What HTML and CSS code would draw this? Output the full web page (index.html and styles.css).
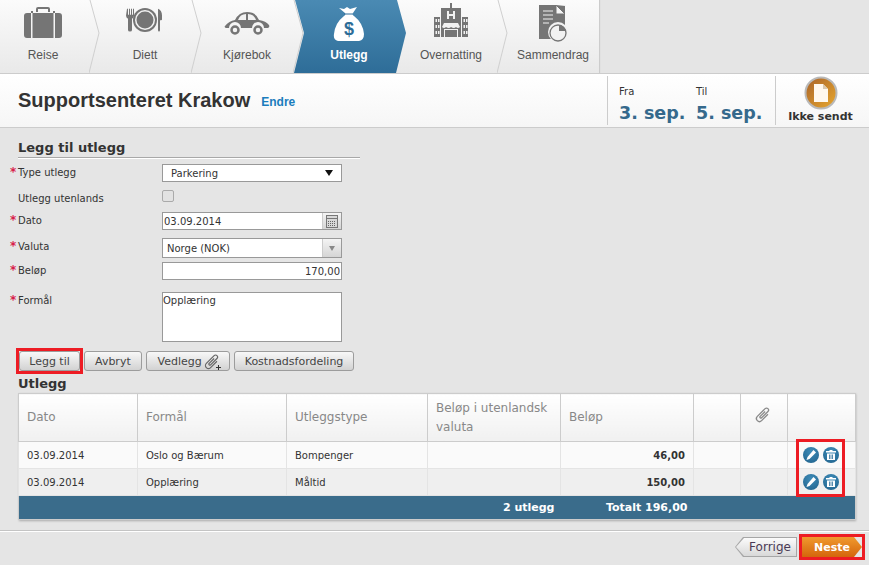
FILE: index.html
```html
<!DOCTYPE html>
<html lang="en">
<head>
    <meta charset="UTF-8">
    <title>Utlegg</title>
    <link rel="stylesheet" href="styles.css">
</head>
<body>
    <nav class="tabs">
        <div class="tab">
            <svg class="tab-icon" width="40" height="36" viewBox="0 -3 40 36">
                <path fill="#757575" d="M13 6V3q0-2 2-2h10q2 0 2 2v3h-2V3H15v3zM8 5h2v2H8zM30 5h2v2h-2zM1 10q0-3 3-3h4v25H4q-3 0-3-3zM9.500 7h21v25h-21zM32 7h4q3 0 3 3v19q0 3-3 3h-4z"/>
            </svg>
            <span>Reise</span>
            <svg class="sep" width="12" height="73" viewBox="0 0 12 73"><path d="M1 0L10 33L0 73" fill="none" stroke="#cfcfcf"/></svg>
        </div>
        <div class="tab">
            <svg class="tab-icon" width="38" height="34" viewBox="0 -1 38 34">
                <path fill="#757575" transform="translate(0 4) scale(1 .76)" d="M1 1h1v8h1V1h1v8h1V1h1v8h1V1h1v9q0 3-2 4v15q0 2-2 2t-2-2V14q-2-1-2-4zM32 1q4 2 4 9v5q0 1-1 1h-1v13q0 2-1 2t-1-2z"/>
                <circle cx="19" cy="16" r="12" fill="#757575"/>
                <circle cx="19" cy="16" r="10" fill="#f2f2f2"/>
                <circle cx="19" cy="16" r="8.500" fill="#757575"/>
            </svg>
            <span>Diett</span>
            <svg class="sep" width="12" height="73" viewBox="0 0 12 73"><path d="M1 0L10 33L0 73" fill="none" stroke="#cfcfcf"/></svg>
        </div>
        <div class="tab">
            <svg class="tab-icon" width="46" height="34" viewBox="0 -2 46 34">
                <path fill="#757575" d="M1 21q4-5 10-6 4-8 12-8 9 0 12 8 7 1 10 5 1 2-1 3h-4a6 6 0 0 0-12 0H17a6 6 0 0 0-12 0H2q-2-1-1-2z"/>
                <path fill="#f2f2f2" d="M14 15q2-6 8-6v6zM24 9q6 0 8 6h-8z"/>
                <circle cx="11" cy="25" r="3.500" fill="none" stroke="#757575" stroke-width="2.500"/>
                <circle cx="34" cy="25" r="3.500" fill="none" stroke="#757575" stroke-width="2.500"/>
            </svg>
            <span>Kjørebok</span>
            <svg class="sep" width="12" height="73" viewBox="0 0 12 73"><path d="M1 0L10 33L0 73" fill="none" stroke="#cfcfcf"/></svg>
        </div>
        <div class="tab tab-active">
            <svg class="active-bg" width="112" height="73" viewBox="0 0 112 73">
                <defs>
                    <linearGradient id="activeGrad" x1="0" y1="0" x2="0" y2="1">
                        <stop offset="0" stop-color="#4a8ab3"/>
                        <stop offset="1" stop-color="#2e6d98"/>
                    </linearGradient>
                </defs>
                <path d="M1 0H103L112 33L102 73H0L10 33Z" fill="url(#activeGrad)"/>
            </svg>
            <svg class="tab-icon" width="32" height="38" viewBox="0 -3 32 38">
                <path fill="#fff" d="M6 2l5 1 3-2 3 2 7-2-4 6q-1 2 1 3 9 7 10 18 0 6-5 7-10 1-21 0-5-1-4-7 1-11 10-18 2-1 1-3z"/>
                <path stroke="#2e6d98" d="M11 8h9"/>
                <text x="16" y="29" class="dollar">$</text>
            </svg>
            <span>Utlegg</span>
        </div>
        <div class="tab">
            <svg class="tab-icon" width="36" height="34" viewBox="0 0 36 34">
                <path fill="#757575" d="M17 0h2v5h9v29H8V5h9zM1 14h6v20H1zM29 14h6v20h-6z"/>
                <path fill="#f2f2f2" d="M14 8h2v3h4V8h2v8h-2v-3h-4v3h-2zM2.500 16h1.500v3H2.500zM5 16h1.500v3H5zM2.500 22h1.500v3H2.500zM5 22h1.500v3H5zM2.500 28h1.500v3H2.500zM5 28h1.500v3H5zM30.500 16H32v3h-1.500zM33 16h1.500v3H33zM30.500 22H32v3h-1.500zM33 22h1.500v3H33zM30.500 28H32v3h-1.500zM33 28h1.500v3H33z"/>
                <path fill="#f2f2f2" d="M11 20h14l2 4q-2 2-4 0-2 2-5 0-2 2-5 0-2 2-4 0z"/>
                <path fill="#f2f2f2" d="M11 26h1v8h-1zM24 26h1v8h-1zM12 26h12v1H12z"/>
            </svg>
            <span>Overnatting</span>
            <svg class="sep" width="12" height="73" viewBox="0 0 12 73"><path d="M1 0L10 33L0 73" fill="none" stroke="#cfcfcf"/></svg>
        </div>
        <div class="tab">
            <svg class="tab-icon" width="30" height="40" viewBox="0 -2 30 40">
                <path fill="#757575" d="M1 0h26v34H1z"/>
                <path fill="#f4f4f4" stroke="#757575" d="M18 0l9 9h-9z"/>
                <path fill="#f4f4f4" d="M18 0h10v1l-1 0z"/>
                <path stroke="#f2f2f2" stroke-width="1.200" d="M5 6h10M5 10h10M5 14h10M5 18h6"/>
                <circle cx="20" cy="27" r="10" fill="#f2f2f2"/>
                <circle cx="20" cy="28" r="8" fill="none" stroke="#757575" stroke-width="1.300"/>
                <path fill="#757575" d="M21 26v-6a8 8 0 0 1 7 6z"/>
            </svg>
            <span>Sammendrag</span>
        </div>
    </nav>

    <header class="trip">
        <h1>Supportsenteret Krakow</h1>
        <a class="change" href="#">Endre</a>
        <div class="dates">
            <div class="date">
                <small>Fra</small>
                <strong>3. sep.</strong>
            </div>
            <div class="date">
                <small>Til</small>
                <strong>5. sep.</strong>
            </div>
        </div>
        <div class="status">
            <svg width="34" height="34" viewBox="0 0 34 34">
                <defs>
                    <linearGradient id="statusGrad" x1="0" y1="0" x2="1" y2="1">
                        <stop offset="0" stop-color="#a8622a"/>
                        <stop offset="1" stop-color="#e9a92e"/>
                    </linearGradient>
                </defs>
                <circle cx="17" cy="17" r="15.500" fill="url(#statusGrad)" stroke="#b9b9b9" stroke-width="2"/>
                <path fill="#fff8ee" d="M10 8h9l5 5v13H10z"/>
                <path fill="#d9c8ae" d="M19 8l5 5h-5z"/>
            </svg>
            <strong>Ikke sendt</strong>
        </div>
    </header>

    <main class="content">
        <section class="form">
            <h2 class="form-title">Legg til utlegg</h2>
            <div class="row row-type">
                <label class="req">Type utlegg</label>
                <div class="select-wrap">
                    <select class="field select-type"><option>Parkering</option></select>
                    <span class="arrow-black"></span>
                </div>
            </div>
            <div class="row row-check">
                <label>Utlegg utenlands</label>
                <span class="check"></span>
            </div>
            <div class="row row-date">
                <label class="req">Dato</label>
                <div class="select-wrap">
                    <input class="field" value="03.09.2014">
                    <span class="side-btn">
                        <svg width="12" height="13" viewBox="0 0 12 13">
                            <rect x=".5" y=".5" width="11" height="12" fill="#d8d8d8" stroke="#777"/>
                            <path stroke="#777" d="M1 3.500h10"/>
                            <path stroke="#666" stroke-dasharray="1 1" d="M2 6.500h8M2 8.500h8M2 10.500h8"/>
                        </svg>
                    </span>
                </div>
            </div>
            <div class="row row-currency">
                <label class="req">Valuta</label>
                <div class="select-wrap">
                    <select class="field select-currency"><option>Norge (NOK)</option></select>
                    <span class="side-btn"><span class="arrow-grey"></span></span>
                </div>
            </div>
            <div class="row row-amount">
                <label class="req">Beløp</label>
                <input class="field field-amount" value="170,00">
            </div>
            <div class="row row-purpose">
                <label class="req">Formål</label>
                <textarea class="field field-purpose">Opplæring</textarea>
            </div>
            <div class="buttons">
                <button class="btn btn-marked">Legg til</button>
                <button class="btn">Avbryt</button>
                <button class="btn btn-attach">Vedlegg
                    <svg width="18" height="17" viewBox="0 0 18 17">
                        <path transform="rotate(45 8 9)" fill="none" stroke="#666" stroke-width="1.200" d="M11 5v9a3 3 0 0 1-6 0V3a2 2 0 0 1 4 0v9a1 1 0 0 1-2 0V5"/>
                        <path stroke="#333" d="M12 14.500h5M14.500 12v5"/>
                    </svg>
                </button>
                <button class="btn">Kostnadsfordeling</button>
            </div>
        </section>

        <h2 class="list-title">Utlegg</h2>
        <div class="table-wrap">
            <table class="list">
                <thead>
                    <tr>
                        <th class="col-date">Dato</th>
                        <th class="col-purpose">Formål</th>
                        <th class="col-type">Utleggstype</th>
                        <th class="col-foreign">Beløp i utenlandsk valuta</th>
                        <th class="col-amount">Beløp</th>
                        <th class="col-blank"></th>
                        <th class="col-clip">
                            <svg width="18" height="18" viewBox="0 0 18 18">
                                <path transform="rotate(45 8 9)" fill="none" stroke="#8a8a8a" stroke-width="1.300" d="M11 5v9a3 3 0 0 1-6 0V3a2 2 0 0 1 4 0v9a1 1 0 0 1-2 0V5"/>
                            </svg>
                        </th>
                        <th class="col-actions"></th>
                    </tr>
                </thead>
                <tbody>
                    <tr>
                        <td>03.09.2014</td>
                        <td>Oslo og Bærum</td>
                        <td>Bompenger</td>
                        <td></td>
                        <td class="num">46,00</td>
                        <td></td>
                        <td></td>
                        <td class="actions">
                            <span class="round"><svg width="12" height="12" viewBox="0 0 12 12"><path fill="#fff" d="M8.500 1l2.500 2.500-6.500 6.500L1.500 11l1-3z"/></svg></span>
                            <span class="round"><svg width="12" height="12" viewBox="0 0 12 12"><path fill="#fff" d="M4.500 1h3v1H11v1.500H1V2h3.500zM2 4.500h8V11H2z"/><path stroke="#2a6f9b" stroke-width=".8" d="M4.500 5.500v4.500M6 5.500v4.500M7.500 5.500v4.500"/></svg></span>
                        </td>
                    </tr>
                    <tr class="even">
                        <td>03.09.2014</td>
                        <td>Opplæring</td>
                        <td>Måltid</td>
                        <td></td>
                        <td class="num">150,00</td>
                        <td></td>
                        <td></td>
                        <td class="actions">
                            <span class="round"><svg width="12" height="12" viewBox="0 0 12 12"><path fill="#fff" d="M8.500 1l2.500 2.500-6.500 6.500L1.500 11l1-3z"/></svg></span>
                            <span class="round"><svg width="12" height="12" viewBox="0 0 12 12"><path fill="#fff" d="M4.500 1h3v1H11v1.500H1V2h3.500zM2 4.500h8V11H2z"/><path stroke="#2a6f9b" stroke-width=".8" d="M4.500 5.500v4.500M6 5.500v4.500M7.500 5.500v4.500"/></svg></span>
                        </td>
                    </tr>
                </tbody>
                <tfoot>
                    <tr>
                        <td colspan="4">2 utlegg</td>
                        <td>Totalt 196,00</td>
                        <td colspan="3"></td>
                    </tr>
                </tfoot>
            </table>
            <div class="marker"></div>
        </div>
    </main>

    <footer class="bottom">
        <a class="prev" href="#">Forrige</a>
        <div class="next-mark"><a class="next" href="#">Neste</a></div>
    </footer>
</body>
</html>
```

FILE: styles.css
```css
html, body {
    margin: 0;
    height: 565px;
    overflow: hidden;
}
body {
    background: #e5e5e5;
    font-family: "DejaVu Sans", sans-serif;
    font-size: 10px;
    color: #333;
}

/* tabs */
.tabs {
    display: flex;
    width: 599px;
    height: 73px;
    background: linear-gradient(#fbfbfb, #e9e9e9);
    box-shadow: 1px 0 1px #ccc;
}
.tab {
    position: relative;
    width: 102px;
    height: 73px;
    flex: none;
    font-family: "Liberation Sans", sans-serif;
    font-size: 12px;
    color: #555;
    text-align: center;
}
.tab:first-child {
    width: 90px;
}
.tab span {
    position: absolute;
    left: 0;
    right: 0;
    top: 48px;
    padding-left: 8px;
}
.tab:first-child span {
    padding-left: 0;
    right: 4px;
}
.tab-icon {
    position: absolute;
    left: calc(50% + 4px);
    top: 3px;
    transform: translateX(-50%);
}
.tab:first-child .tab-icon {
    left: 23px;
    transform: none;
}
.sep {
    position: absolute;
    right: -11px;
    top: 0;
    z-index: 1;
}
.tab-active {
    color: #fff;
    font-weight: bold;
}
.active-bg {
    position: absolute;
    left: 0;
    top: 0;
    z-index: 1;
}
.tab-active .tab-icon,
.tab-active span {
    z-index: 2;
}
.dollar {
    font-family: "Liberation Sans", sans-serif;
    font-size: 18px;
    font-weight: bold;
    fill: #2e6d98;
    text-anchor: middle;
}

/* trip header */
.trip {
    display: flex;
    align-items: center;
    height: 53px;
    padding-left: 18px;
    border-top: 1px solid #ccc;
    border-bottom: 1px solid #ccc;
    background: linear-gradient(#fff, #f6f6f6);
}
.trip h1 {
    margin: 0 11px 0 0;
    font-family: "Liberation Sans", sans-serif;
    font-size: 20px;
    color: #333;
}
.change {
    margin-top: 3px;
    font-family: "Liberation Sans", sans-serif;
    font-size: 12px;
    font-weight: bold;
    color: #1b7dbd;
    text-decoration: none;
}
.dates {
    display: flex;
    align-self: stretch;
    margin: 2px 0 2px auto;
    width: 168px;
    padding-left: 11px;
    border-left: 1px solid #ccc;
    box-sizing: border-box;
}
.date {
    width: 77px;
    padding-top: 10px;
}
.date small {
    display: block;
    font-size: 10px;
}
.date strong {
    display: block;
    margin-top: 5px;
    font-size: 17.500px;
    line-height: 22px;
    color: #35698c;
    white-space: nowrap;
}
.status {
    display: flex;
    flex-direction: column;
    align-items: center;
    align-self: stretch;
    width: 94px;
    margin: 2px 0;
    padding-right: 4px;
    border-left: 1px solid #ccc;
    box-sizing: border-box;
}
.status strong {
    font-size: 11px;
    line-height: 14px;
    white-space: nowrap;
}

/* form */
.content {
    padding: 12px 14px 0 18px;
}
.form-title {
    width: 342px;
    margin: 0;
    padding-bottom: 2px;
    border-bottom: 1px solid #a8a8a8;
    box-shadow: 0 1px 0 #fff;
    font-size: 13px;
    line-height: 15px;
}
.row {
    display: flex;
    align-items: flex-start;
}
.row label {
    position: relative;
    width: 144px;
    flex: none;
    padding-top: 2px;
    line-height: 14px;
}
.req::before {
    content: "*";
    position: absolute;
    left: -8px;
    top: 1px;
    color: #d81e4b;
    font-size: 12px;
    font-weight: bold;
}
.row-type {
    margin-top: 6px;
    height: 26px;
}
.row-check {
    height: 22px;
}
.row-date {
    height: 26px;
}
.row-currency {
    height: 24px;
}
.row-amount {
    height: 30px;
}
.row-purpose {
    height: 59px;
}
.select-wrap {
    position: relative;
    width: 180px;
}
.field {
    display: block;
    width: 180px;
    height: 18px;
    margin: 0;
    padding: 0 1px;
    box-sizing: border-box;
    border: 1px solid #999;
    border-radius: 0;
    background: #fff;
    font-family: "DejaVu Sans", sans-serif;
    font-size: 10px;
    color: #333;
    appearance: none;
    outline: none;
}
.select-type {
    padding-left: 8px;
}
.select-currency {
    height: 20px;
    padding-left: 4px;
}
.field-amount {
    text-align: right;
}
.field-purpose {
    height: 50px;
    padding: 2px 0;
    resize: none;
}
.arrow-black {
    position: absolute;
    right: 9px;
    top: 6px;
    border: 4px solid transparent;
    border-top: 6px solid #111;
    border-bottom: 0;
}
.check {
    width: 10px;
    height: 10px;
    border: 1px solid #aaa;
    border-radius: 2px;
    background: #e2e2e2;
}
.side-btn {
    position: absolute;
    right: 1px;
    top: 1px;
    bottom: 1px;
    width: 18px;
    display: flex;
    align-items: center;
    justify-content: center;
    border-left: 1px solid #ccc;
    background: linear-gradient(#f4f4f4, #d5d5d5);
}
.arrow-grey {
    border: 3px solid transparent;
    border-top: 5px solid #888;
    border-bottom: 0;
}
.buttons {
    display: flex;
    gap: 4px;
    margin-left: 1px;
}
.btn {
    display: flex;
    align-items: center;
    justify-content: center;
    gap: 2px;
    height: 20px;
    padding: 0 10px;
    border: 1px solid #9c9c9c;
    border-radius: 3px;
    background: linear-gradient(#f8f8f8, #d2d2d2);
    font-family: "DejaVu Sans", sans-serif;
    font-size: 11px;
    color: #444;
}
.btn-marked {
    position: relative;
    width: 61px;
    padding: 0;
}
.btn-marked::after {
    content: "";
    position: absolute;
    inset: -4px;
    border: 3px solid #ed1c24;
}
.btn-attach {
    width: 84px;
    padding: 0 0 0 4px;
}

/* list */
.list-title {
    margin: 5px 0 0;
    font-size: 13px;
    line-height: 15px;
    height: 17px;
}
.table-wrap {
    position: relative;
    width: 837px;
    box-shadow: 1px 1px 2px #aaa;
}
.list {
    width: 837px;
    border-collapse: collapse;
    table-layout: fixed;
    border: 1px solid #ccc;
}
.list th {
    height: 48px;
    padding: 0 8px;
    box-sizing: border-box;
    border: 1px solid #ccc;
    border-top: 0;
    background: linear-gradient(#fff, #f0f0f0);
    font-size: 12px;
    font-weight: normal;
    line-height: 19px;
    color: #888;
    text-align: left;
}
.col-date { width: 119px; }
.col-purpose { width: 149px; }
.col-type { width: 141px; }
.col-foreign { width: 133px; }
.col-amount { width: 133px; }
.col-blank { width: 47px; }
.col-clip { width: 47px; }
.col-actions { width: 68px; }
.list .col-clip {
    padding: 0;
    text-align: center;
}
.list td {
    height: 27px;
    padding: 0 8px;
    box-sizing: border-box;
    border: 1px solid #e4e4e4;
    background: #fafafa;
}
.list .even td {
    background: #efefef;
}
.list .num {
    text-align: right;
    font-weight: bold;
}
.list .actions {
    padding: 0 0 0 15px;
    white-space: nowrap;
    font-size: 0;
}
.round {
    display: inline-flex;
    align-items: center;
    justify-content: center;
    width: 16px;
    height: 16px;
    margin-right: 4px;
    border-radius: 50%;
    background: radial-gradient(circle at 50% 30%, #3f8cb8, #1f618b);
    vertical-align: middle;
}
.list tfoot td {
    height: 24px;
    padding: 0 6px;
    border: 0;
    background: #3a6c8b;
    color: #fff;
    font-size: 11px;
    font-weight: bold;
    text-align: right;
}
.marker {
    position: absolute;
    left: 778px;
    top: 46px;
    width: 43px;
    height: 52px;
    border: 3px solid #ed1c24;
}

/* bottom nav */
.bottom {
    display: flex;
    justify-content: flex-end;
    align-items: center;
    gap: 2px;
    margin-top: 10px;
    height: 34px;
    padding: 0 4px 1px 0;
    box-sizing: border-box;
    border-top: 1px solid #c4c4c4;
    box-shadow: inset 0 1px 0 #fff;
}
.prev, .next {
    display: block;
    height: 20px;
    line-height: 21px;
    text-align: center;
    text-decoration: none;
}
.prev {
    position: relative;
    isolation: isolate;
    width: 54px;
    padding-left: 8px;
    clip-path: polygon(8px 0, 100% 0, 100% 100%, 8px 100%, 0 50%);
    background: #a6a6a6;
    font-size: 12px;
    color: #4a3a55;
}
.prev::before {
    content: "";
    position: absolute;
    inset: 1px;
    z-index: -1;
    clip-path: polygon(8px 0, 100% 0, 100% 100%, 8px 100%, 0 50%);
    background: linear-gradient(#fbfbfb, #d8d8d8);
}
.next-mark {
    border: 3px solid #ed1c24;
}
.next {
    width: 60px;
    clip-path: polygon(0 0, 52px 0, 100% 50%, 52px 100%, 0 100%);
    background: linear-gradient(#f09a2e, #d4650c);
    font-size: 11px;
    color: #fff;
    font-weight: bold;
}
```
